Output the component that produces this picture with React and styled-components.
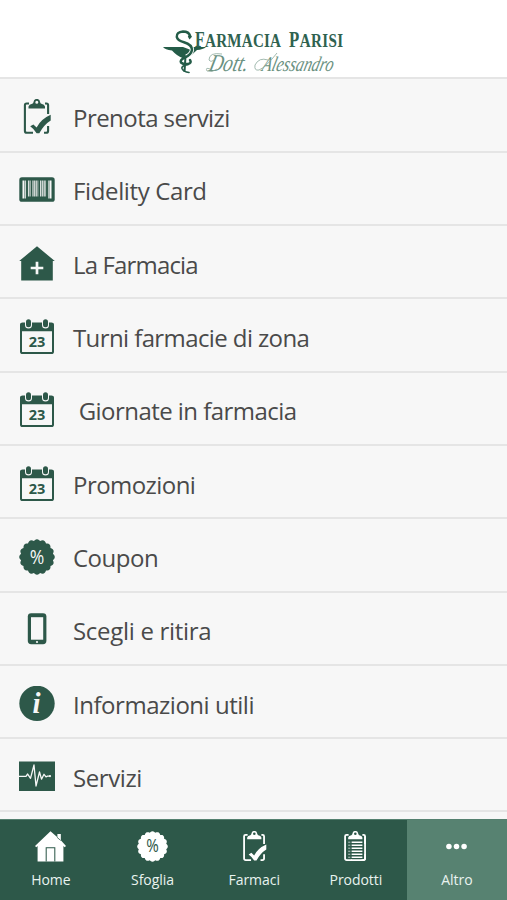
import React from "react";
import styled, { createGlobalStyle } from "styled-components";

const GREEN = "#2d5849";

const GlobalStyle = createGlobalStyle`
  * {
    box-sizing: border-box;
  }
  body {
    margin: 0;
    background: #f7f7f7;
    font-family: "Open Sans", "Noto Sans", sans-serif;
  }
`;

const S = {
  Screen: styled.div`
    width: 100%;
    max-width: 507px;
    height: 900px;
    display: flex;
    flex-direction: column;
    overflow: hidden;
    background: #f7f7f7;
  `,
  Header: styled.header`
    flex: none;
    height: 79px;
    display: flex;
    justify-content: center;
    align-items: flex-end;
    background: #ffffff;
    border-bottom: 2px solid #e5e5e5;
  `,
  List: styled.ul`
    flex: 1;
    min-height: 0;
    margin: 0;
    padding: 0.5px 0 0;
    overflow: hidden;
    list-style: none;
  `,
  Row: styled.li`
    height: 73.3px;
    display: flex;
    align-items: center;
    padding: 4px 19px 0;
    border-bottom: 2px solid #e5e5e5;
  `,
  RowIcon: styled.span`
    width: 36px;
    height: 36px;
    margin-right: 18px;
    display: flex;
    color: ${GREEN};
  `,
  RowLabel: styled.span`
    font-size: 24px;
    line-height: 32px;
    letter-spacing: ${(props) => props.$spacing}px;
    white-space: pre;
    color: #4a4a4a;
    padding-top: 2px;
  `,
  TabBar: styled.nav`
    flex: none;
    height: 81px;
    display: grid;
    grid-template-columns: repeat(4, 101.7px) 1fr;
    background: ${GREEN};
    border-top: 1px solid #55806f;
  `,
  Tab: styled.a`
    display: flex;
    flex-direction: column;
    align-items: center;
    padding-top: 11px;
    color: #ffffff;
    background: ${(props) => (props.$active ? "#578271" : "transparent")};
  `,
  TabIcon: styled.span`
    width: 31px;
    height: 31px;
    display: flex;
  `,
  TabLabel: styled.span`
    margin-top: 8px;
    font-size: 14px;
    line-height: 20px;
    letter-spacing: -0.05px;
    color: #e9f3ef;
  `,
};

const Icon = ({ children }) => (
  <svg width="100%" height="100%" viewBox="0 0 36 36" fill="none">
    {children}
  </svg>
);

const Clipboard = () => (
  <>
    <path
      d="M10 4.5H7.6Q5.9 4.5 5.9 6.2V32Q5.9 33.8 7.9 33.8H14M26 4.5H27.4Q29.1 4.5 29.1 6.2V15M29.1 27V32Q29.1 33.8 27.1 33.8H25"
      stroke="currentColor"
      strokeWidth="2.1"
    />
    <path
      fillRule="evenodd"
      d="M9.5 9.5V7.5Q10 5.2 13.2 4.8Q14.3 4.4 14.5 3Q14.8 -.1 17.8 -.1T21.1 3Q21.3 4.4 22.4 4.8Q25.5 5.2 26 7.5V9.5ZM16.3 3.2A1.5 1.5 0 1 0 19.3 3.2A1.5 1.5 0 1 0 16.3 3.2Z"
      fill="currentColor"
    />
  </>
);

const ClipboardCheck = () => (
  <Icon>
    <Clipboard />
    <path
      d="M11.2 27.3L14.4 25.4L17.6 28.5Q22 20 31.7 15.8V21.4Q25 25.5 20.3 34.2H17.6Q15 30 11.2 27.3Z"
      fill="currentColor"
    />
  </Icon>
);

const ClipboardList = () => (
  <Icon>
    <Clipboard />
    <path d="M13 33.8H27.1Q29.1 33.8 29.1 32V6" stroke="currentColor" strokeWidth="2.1" />
    <path
      d="M13.5 13H26M13.5 16.5H26M13.5 20H26M13.5 23.5H26M13.5 27H26M13.5 30.5H26"
      stroke="currentColor"
      strokeWidth="1.7"
    />
    <path
      d="M9.5 13H12M9.5 16.5H12M9.5 20H12M9.5 23.5H12M9.5 27H12M9.5 30.5H12"
      stroke="currentColor"
      strokeWidth=".8"
    />
  </Icon>
);

const Barcode = () => (
  <Icon>
    <rect x=".3" y="5.3" width="35.4" height="24.5" rx="2.6" fill="currentColor" />
    <path d="M3.5 8.5H32.5V26.5H29V24.5H7V26.5H3.5Z" fill="#f7f7f7" />
    <path
      d="M8 8V25M12.5 8V25M20.2 8V25M28 8V25"
      stroke="currentColor"
      strokeWidth="1.9"
    />
    <path
      d="M5.8 8V27M10.3 8V25M14.8 8V25M16.7 8V25M18.3 8V25M22.6 8V25M24.3 8V25M26.1 8V25M30 8V27"
      stroke="currentColor"
      strokeWidth=".7"
    />
  </Icon>
);

const Pharmacy = () => (
  <Icon>
    <path d="M18 .3L35.8 15H33.8V34.5H2.2V15H.2Z" fill="currentColor" />
    <path d="M18 15.7V28.3M11.7 22H24.3" stroke="#f7f7f7" strokeWidth="2.7" />
  </Icon>
);

const Calendar = () => (
  <Icon>
    <rect x="2" y="4.5" width="32" height="29.5" rx="1.6" stroke="currentColor" strokeWidth="2" />
    <rect x="1.5" y="4" width="33" height="8.3" rx="1" fill="currentColor" />
    <rect x="6" y="-1" width="7" height="10.5" rx="3.5" fill="#f7f7f7" />
    <rect x="23" y="-1" width="7" height="10.5" rx="3.5" fill="#f7f7f7" />
    <rect x="7" y=".3" width="5" height="8" rx="2.5" fill="currentColor" />
    <rect x="24" y=".3" width="5" height="8" rx="2.5" fill="currentColor" />
    <text
      x="18"
      y="28.3"
      textAnchor="middle"
      fontFamily="Open Sans"
      fontWeight="700"
      fontSize="14.5"
      fill="currentColor"
    >
      23
    </text>
  </Icon>
);

// scalloped edge with 16 rounded teeth
const badgePoints = Array.from({ length: 96 }, (_, i) => {
  const a = (i / 96) * Math.PI * 2;
  const r = 16.2 + 1.6 * Math.abs(Math.cos(a * 8));
  return `${(18 + r * Math.sin(a)).toFixed(2)},${(18 - r * Math.cos(a)).toFixed(2)}`;
}).join(" ");

const Percent = ({ ink = "#f7f7f7" }) => (
  <Icon>
    <polygon points={badgePoints} fill="currentColor" />
    <text
      transform="translate(18 24.8) scale(.86 1)"
      textAnchor="middle"
      fontFamily="Open Sans"
      fontSize="20.5"
      fill={ink}
    >
      %
    </text>
  </Icon>
);

const Phone = () => (
  <Icon>
    <rect x="8.8" y="1.2" width="18.6" height="31" rx="3.4" fill="currentColor" />
    <rect x="12" y="5.2" width="12.2" height="22.5" fill="#f7f7f7" />
    <circle cx="18" cy="30" r="1.1" fill="#f7f7f7" />
  </Icon>
);

const Info = () => (
  <Icon>
    <circle cx="18" cy="17.4" r="17.7" fill="currentColor" />
    <text
      x="17.5"
      y="27"
      textAnchor="middle"
      fontFamily="Liberation Serif"
      fontStyle="italic"
      fontWeight="700"
      fontSize="29"
      fill="#f7f7f7"
    >
      i
    </text>
  </Icon>
);

const Pulse = () => (
  <Icon>
    <rect x="0" y="2.5" width="36" height="29.5" fill="currentColor" />
    <path
      d="M0 17.3H7L8.5 15L10.2 17.3L11.5 19.3L15 6L17 27L20.5 13L22.5 20.2L25 15.3L27 17.8L28.5 17.1H31"
      stroke="#f7f7f7"
      strokeWidth="1.3"
      strokeLinejoin="round"
    />
    <circle cx="31" cy="17.1" r="1.1" fill="#f7f7f7" />
  </Icon>
);

const Home = () => (
  <Icon>
    <path
      d="M18 .2L26 7.2V3.5H30V10.8L36 17.3L34.5 18.8L33 17.4V35.5H3V17.4L1.5 18.8L0 17.3Z"
      fill="#fff"
    />
    <path d="M13 35.5V19.5H23V35.5" stroke={GREEN} strokeWidth="1.2" />
    <path d="M25.5 7.2L29.8 11" stroke={GREEN} strokeWidth=".9" />
  </Icon>
);

const Dots = () => (
  <Icon>
    <circle cx="9.2" cy="18" r="3.2" fill="#fff" />
    <circle cx="18" cy="18" r="3.2" fill="#fff" />
    <circle cx="26.8" cy="18" r="3.2" fill="#fff" />
  </Icon>
);

const Logo = () => (
  <svg width="210" height="52" viewBox="149 25 210 52" fill="none">
    {/* cup */}
    <path
      d="M163 47H183L191 50L193 47H206Q203 49.5 197 50Q192 55 187.5 58H182.5Q177 56 172 50.5Q165 49.8 163 47Z"
      fill="#245c48"
    />
    <path d="M185.5 56L184.5 72" stroke="#245c48" strokeWidth="2" />
    {/* snake */}
    <path
      d="M183 42Q192 44.5 192 50Q191 55 186 56.5"
      stroke="#fff"
      strokeWidth="4.2"
    />
    <path
      d="M190 36Q189 31.5 183 31.5Q176.3 32 176.8 37Q177.5 40.5 184 42.2Q192 44.5 192 50Q191 55 185 57.5Q179.5 60 181 62.5Q183 64.5 188 64Q192 63 190 60"
      stroke="#245c48"
      strokeWidth="2.5"
      strokeLinecap="round"
    />
    <path
      d="M188 64.5Q181 66 182 68.5Q183.5 72 189 72.5"
      stroke="#245c48"
      strokeWidth="1.7"
      strokeLinecap="round"
    />
    <path d="M187.8 36.5L190 34L192 36.8L189.5 39.5Z" fill="#245c48" />
    <g fontFamily="Liberation Serif" fontWeight="700" fill="#2f6250">
      <text transform="translate(195 46.5) scale(.66 1)" fontSize="24">F</text>
      <text transform="translate(205 46.5) scale(.82 1)" fontSize="18.4" letterSpacing=".3">
        ARMACIA
      </text>
      <text transform="translate(289 46.5) scale(.7 1)" fontSize="24">P</text>
      <text transform="translate(299.7 46.5) scale(.82 1)" fontSize="18.4" letterSpacing=".5">
        ARISI
      </text>
    </g>
    <g fontFamily="Liberation Serif" fontStyle="italic" fill="#6a9181">
      <text transform="translate(208 70.5) skewX(-14) scale(.8 1)" fontSize="24">Dott.</text>
      <text transform="translate(261 70.5) skewX(-14) scale(.76 1)" fontSize="21">Alessandro</text>
    </g>
    <path
      d="M222 54Q209 52 209 60Q211 63 215 59M210 69Q205 67 207 71Q212 73 217 69M268 60Q259 57 255 65Q254 71 259 70Q266 67 277 53"
      stroke="#8aa89c"
      strokeWidth=".8"
    />
  </svg>
);

const menu = [
  { label: "Prenota servizi", icon: ClipboardCheck, spacing: -0.55 },
  { label: "Fidelity Card", icon: Barcode, spacing: -0.37 },
  { label: "La Farmacia", icon: Pharmacy, spacing: -0.85 },
  { label: "Turni farmacie di zona", icon: Calendar, spacing: -0.6 },
  { label: " Giornate in farmacia", icon: Calendar, spacing: -0.55 },
  { label: "Promozioni", icon: Calendar, spacing: -0.55 },
  { label: "Coupon", icon: Percent, spacing: -0.5 },
  { label: "Scegli e ritira", icon: Phone, spacing: -0.3 },
  { label: "Informazioni utili", icon: Info, spacing: -0.47 },
  { label: "Servizi", icon: Pulse, spacing: -0.4 },
];

const tabs = [
  { label: "Home", icon: <Home /> },
  { label: "Sfoglia", icon: <Percent ink={GREEN} /> },
  { label: "Farmaci", icon: <ClipboardCheck /> },
  { label: "Prodotti", icon: <ClipboardList /> },
  { label: "Altro", icon: <Dots />, active: true },
];

const App = () => {
  return (
    <S.Screen>
      <GlobalStyle />
      <S.Header>
        <Logo />
      </S.Header>
      <S.List>
        {menu.map(({ label, icon: RowIcon, spacing }) => (
          <S.Row key={label}>
            <S.RowIcon>
              <RowIcon />
            </S.RowIcon>
            <S.RowLabel $spacing={spacing}>{label}</S.RowLabel>
          </S.Row>
        ))}
      </S.List>
      <S.TabBar>
        {tabs.map(({ label, icon, active }) => (
          <S.Tab key={label} $active={active}>
            <S.TabIcon>{icon}</S.TabIcon>
            <S.TabLabel>{label}</S.TabLabel>
          </S.Tab>
        ))}
      </S.TabBar>
    </S.Screen>
  );
};

export default App;
